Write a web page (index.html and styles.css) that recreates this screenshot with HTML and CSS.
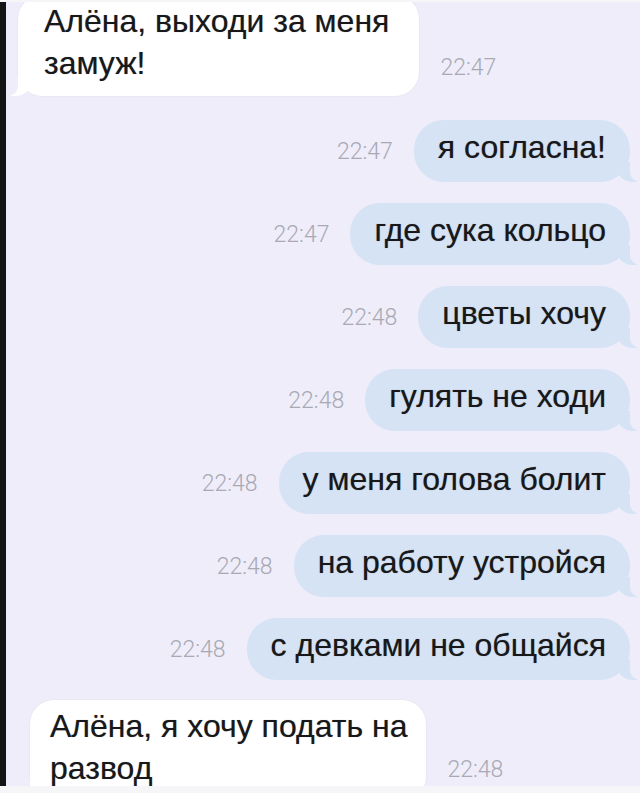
FILE: index.html
```html
<!DOCTYPE html>
<html lang="ru">
<head>
    <meta charset="UTF-8">
    <meta name="viewport" content="width=device-width, initial-scale=1.0">
    <title>Алёна</title>
    <link rel="stylesheet" href="styles.css">
</head>
<body>

<div class="chat">
    <!-- incoming -->
    <div class="row row-in row-first">
        <div class="bubble bubble-in">Алёна, выходи за меня<br>замуж!</div>
        <span class="time">22:47</span>
    </div>

    <!-- outgoing -->
    <div class="row row-out row-gap-first">
        <span class="time">22:47</span>
        <div class="bubble bubble-out">я согласна!</div>
    </div>
    <div class="row row-out">
        <span class="time">22:47</span>
        <div class="bubble bubble-out">где сука кольцо</div>
    </div>
    <div class="row row-out">
        <span class="time">22:48</span>
        <div class="bubble bubble-out">цветы хочу</div>
    </div>
    <div class="row row-out">
        <span class="time">22:48</span>
        <div class="bubble bubble-out">гулять не ходи</div>
    </div>
    <div class="row row-out">
        <span class="time">22:48</span>
        <div class="bubble bubble-out">у меня голова болит</div>
    </div>
    <div class="row row-out">
        <span class="time">22:48</span>
        <div class="bubble bubble-out">на работу устройся</div>
    </div>
    <div class="row row-out">
        <span class="time">22:48</span>
        <div class="bubble bubble-out">с девками не общайся</div>
    </div>

    <!-- incoming -->
    <div class="row row-in row-last">
        <div class="bubble bubble-in">Алёна, я хочу подать на<br>развод</div>
        <span class="time">22:48</span>
    </div>
</div>

</body>
</html>
```

FILE: styles.css
```css
body {
    margin: 0;
    padding: 0;
    background: #f6f6f8;
    font-family: 'Liberation Sans', Arial, sans-serif;
}

/* Chat area (cropped screenshot) */
.chat {
    height: 784px;
    margin-top: 2px;
    border-left: 6px solid #141414;
    background: #eeedf9;
    overflow: hidden;
    display: flex;
    flex-direction: column;
    padding-right: 10px;
    box-sizing: border-box;
}

.row {
    display: flex;
    flex-shrink: 0;
    gap: 21px;
}

.row-out {
    justify-content: flex-end;
    align-items: center;
    margin-top: 21px;
}

.row-in {
    align-items: flex-end;
}

.row-first {
    margin-top: -7px;
    margin-left: 12px;
}

.row-gap-first {
    margin-top: 24px;
}

.row-last {
    margin-top: 20px;
    margin-left: 24px;
}

/* Bubbles */
.bubble {
    position: relative;
    font-size: 32px;
    line-height: 42px;
    color: #18181b;
    white-space: nowrap;
    border-radius: 30px;
    text-shadow: 0 0 0.8px rgba(0, 0, 0, 0.45);
}

.bubble-out {
    background: #d6e3f5;
    padding: 6px 24px 14px 24px;
}

.bubble-in {
    background: #ffffff;
    padding: 5px 30px 12px 26px;
    border-radius: 24px;
    box-shadow: 0 0 2px rgba(0, 0, 0, 0.08);
}

.row-last .bubble-in {
    padding-left: 20px;
    padding-right: 19px;
}

/* Tails */
.bubble-out::before {
    content: "";
    position: absolute;
    right: -7px;
    bottom: 0;
    width: 20px;
    height: 20px;
    background: #d6e3f5;
    border-bottom-left-radius: 16px 14px;
}

.bubble-out::after {
    content: "";
    position: absolute;
    right: -12px;
    bottom: 0;
    width: 12px;
    height: 22px;
    background: #eeedf9;
    border-bottom-left-radius: 10px;
}

.bubble-in::before {
    content: "";
    position: absolute;
    left: -7px;
    bottom: 0;
    width: 20px;
    height: 20px;
    background: #ffffff;
    border-bottom-right-radius: 16px 14px;
}

.bubble-in::after {
    content: "";
    position: absolute;
    left: -12px;
    bottom: 0;
    width: 12px;
    height: 22px;
    background: #eeedf9;
    border-bottom-right-radius: 10px;
}

/* Timestamps */
.time {
    font-family: Roboto, 'Liberation Sans', sans-serif;
    font-weight: 300;
    font-size: 23px;
    line-height: 23px;
    color: #a9a9b4;
}

.row-in .time {
    margin-bottom: 17px;
}

.row-last .time {
    margin-bottom: 20px;
}
```
